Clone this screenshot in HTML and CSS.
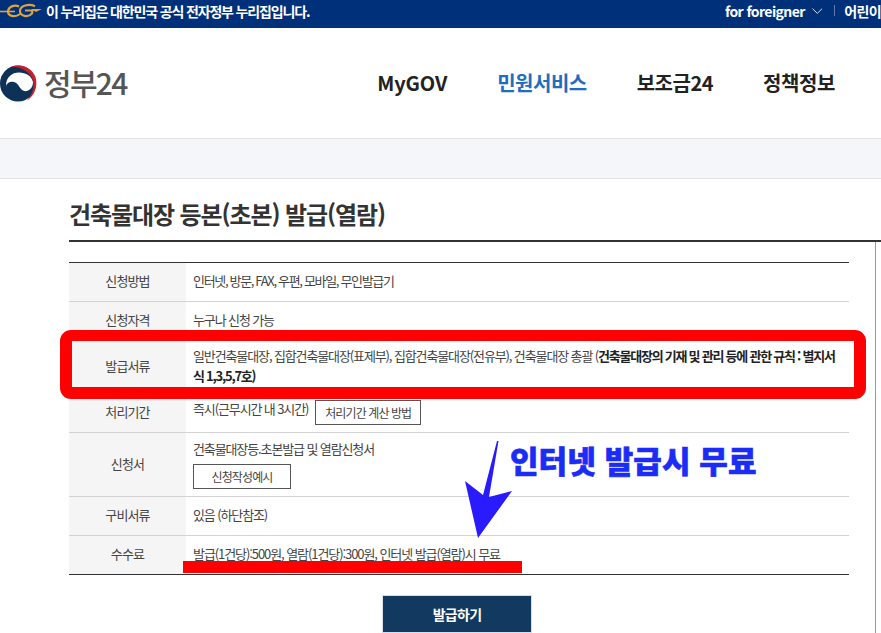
FILE: index.html
```html
<!DOCTYPE html>
<html lang="ko">
<head>
<meta charset="utf-8">
<title>건축물대장 등본(초본) 발급(열람)</title>
<link rel="stylesheet" href="styles.css">
</head>
<body>
<div class="topbar">
  <div class="gov">
    <svg class="eg" width="42" height="16" viewBox="0 0 42 16"><path d="M0 8.500H15" stroke="#d9a441" stroke-width="1.600" fill="none"/><path d="M19 3.500C15 1.500 9 3 8 8c-.5 5 7 7 12 3" stroke="#d9a441" stroke-width="2.200" fill="none"/><path d="M35 3.200C29 .5 20 2.500 20 8c0 5 8 7 12 2.500l.5-3H25" stroke="#d9a441" stroke-width="2.200" fill="none"/><path d="M31 6h11l-6 3z" fill="#d9a441"/></svg>
    <span class="gov-text">이 누리집은 대한민국 공식 전자정부 누리집입니다.</span>
  </div>
  <div class="util">
    <span class="foreigner">for foreigner</span>
    <svg class="chev" width="11" height="6" viewBox="0 0 11 6"><path d="M.5.5l5 5 5-5" stroke="#dfe6f2" fill="none"/></svg>
    <span class="sep"></span>
    <span class="kids">어린이</span>
  </div>
</div>
<header class="header">
  <div class="logo">
    <svg width="37" height="37" viewBox="0 0 37 37">
      <circle cx="18" cy="18.500" r="18" fill="#0e3158"/>
      <path d="M6 21C6 12 12 7.500 19 7.500C26 7.500 31.500 11 33 17C33 25 26 28 22 25C19 22 18 18 14 17C10 16 7 18 6 21Z" fill="#fff"/>
      <path d="M24 0H37V37H24C31 33 36 28 36 18.500C36 9 31 3 24 0Z" fill="#fff"/>
      <path d="M11 1.500C22-2 32 3 35.500 12C38 21 35 30 27 35.500C32 30 34.500 23 33 16C31 8 23 2 11 1.500Z" fill="#c5202e"/>
    </svg>
    <span class="logo-text">정부24</span>
  </div>
  <nav class="nav">
    <a class="nav-a">MyGOV</a>
    <a class="nav-b active">민원서비스</a>
    <a class="nav-c">보조금24</a>
    <a class="nav-d">정책정보</a>
  </nav>
</header>
<div class="crumb"></div>
<main class="main">
  <h1 class="title">건축물대장 등본(초본) 발급(열람)</h1>
  <div class="panel">
    <div class="info">
      <div class="th">신청방법</div>
      <div class="td"><span class="tight">인터넷, 방문, FAX, 우편, 모바일, 무인발급기</span></div>
      <div class="th">신청자격</div>
      <div class="td"><span>누구나 신청 가능</span></div>
      <div class="th">발급서류</div>
      <div class="td"><span>일반건축물대장, 집합건축물대장(표제부), 집합건축물대장(전유부), 건축물대장 총괄 (<b>건축물대장의 기재 및 관리 등에 관한 규칙 : 별지서식 1,3,5,7호)</b></span></div>
      <div class="th">처리기간</div>
      <div class="td inline"><span>즉시(근무시간 내 3시간)</span><span class="btn btn-time">처리기간 계산 방법</span></div>
      <div class="th">신청서</div>
      <div class="td stack"><span>건축물대장등.초본발급 및 열람신청서</span><span class="btn btn-form">신청작성예시</span></div>
      <div class="th">구비서류</div>
      <div class="td"><span>있음 (하단참조)</span></div>
      <div class="th last">수수료</div>
      <div class="td last"><span class="loose">발급(1건당):500원, 열람(1건당):300원, 인터넷 발급(열람)시 무료</span></div>
    </div>
    <div class="actions"><span class="issue">발급하기</span></div>
  </div>
</main>
<div class="red-box"></div>
<div class="red-line"></div>
<svg class="arrow" width="50" height="100" viewBox="0 0 50 100"><polygon points="32,0 33.500,0 24,56 47,50 13,97 0,40 18,54" fill="#2a1bff"/></svg>
<div class="note">인터넷 발급시 무료</div>
</body>
</html>
```
FILE: styles.css
```css
* { box-sizing: border-box; }
html, body { margin: 0; padding: 0; }
body {
  width: 881px;
  height: 633px;
  overflow: hidden;
  position: relative;
  background: #fff;
  color: #333;
  font-family: "Noto Sans CJK KR", "Noto Sans", sans-serif;
}
.topbar {
  height: 28px;
  padding-bottom: 7px;
  background: #00307a;
  color: #fff;
  display: flex;
  justify-content: space-between;
  align-items: center;
  overflow: hidden;
  font-size: 14px;
  font-weight: 700;
  white-space: nowrap;
}
.gov { display: flex; align-items: center; gap: 4px; }
.eg { display: block; }
.gov-text { letter-spacing: -1.16px; line-height: 20px; }
.util { display: flex; align-items: center; width: 156px; flex: none; }
.foreigner { letter-spacing: -0.6px; width: 90px; line-height: 20px; }
.chev { margin-right: 12px; }
.sep { width: 1px; height: 11px; background: #5c7cb0; margin-right: 9px; }
.kids { letter-spacing: -0.6px; line-height: 20px; }
.header {
  height: 110px;
  display: flex;
  align-items: center;
  justify-content: space-between;
  padding-right: 46px;
}
.logo { display: flex; align-items: center; gap: 7px; padding-top: 1px; }
.logo svg { display: block; }
.logo-text {
  font-size: 30px;
  line-height: 36px;
  color: #555;
  letter-spacing: -1.7px;
  font-weight: 500;
  position: relative;
  top: -2px;
}
.nav { display: flex; font-size: 20px; font-weight: 700; line-height: 30px; color: #222; }
.nav a { display: block; white-space: nowrap; }
.nav-a { letter-spacing: -0.1px; margin-right: 50px; }
.nav-b { letter-spacing: -0.5px; margin-right: 50px; }
.nav-c { letter-spacing: -0.5px; margin-right: 50px; }
.nav-d { letter-spacing: -0.4px; }
.active { color: #1f6dc1; }
.crumb {
  height: 41px;
  background: #f5f6fa;
  border-top: 1px solid #e2e2e6;
  border-bottom: 1px solid #e2e2e6;
}
.main { padding-left: 69px; }
.title {
  margin: 0;
  height: 63px;
  padding-top: 17px;
  font-size: 24px;
  line-height: 36px;
  font-weight: 700;
  letter-spacing: -1.1px;
  color: #333;
  border-bottom: 2px solid #333;
  white-space: nowrap;
}
.panel {
  width: 807px;
  padding-top: 20px;
  border-right: 1px solid #999;
  height: 400px;
}
.info {
  width: 780px;
  display: grid;
  grid-template-columns: 117px 1fr;
  grid-template-rows: 39px 39px 53px 39px 64px 39px 39px;
  border-top: 1px solid #333;
  font-size: 13px;
  line-height: 20px;
}
.th, .td { border-bottom: 1px solid #d3d3d3; display: flex; padding-bottom: 2px; }
.th {
  background: #f5f5f5;
  align-items: center;
  justify-content: center;
  color: #444;
  letter-spacing: -0.85px;
}
.td {
  align-items: center;
  padding-left: 7px;
  padding-right: 8px;
  color: #444;
  letter-spacing: -1.12px;
}
.tight { letter-spacing: -1.33px; }
.loose { letter-spacing: -1.08px; }
.td b { color: #222; font-weight: 700; letter-spacing: -1.24px; }
.td.inline { align-items: flex-start; padding-top: 5px; }
.td.stack { flex-direction: column; align-items: flex-start; padding-top: 6px; }
.last { border-bottom-color: #333; }
.btn {
  display: flex;
  align-items: center;
  justify-content: center;
  height: 25px;
  border: 1px solid #555;
  color: #444;
  font-size: 12px;
  letter-spacing: -0.9px;
}
.btn-time { width: 106px; margin-left: 7px; margin-top: 1px; }
.btn-form { width: 98px; margin-top: 5px; }
.actions { display: flex; justify-content: center; width: 780px; padding-top: 20px; padding-right: 4px; }
.issue {
  width: 150px;
  height: 38px;
  background: #123a60;
  border: 1px solid #d5e0ea;
  color: #fff;
  font-size: 14px;
  font-weight: 700;
  letter-spacing: -0.7px;
  display: flex;
  align-items: center;
  justify-content: center;
}
.red-box {
  position: absolute;
  left: 60px;
  top: 330px;
  width: 806px;
  height: 69px;
  border: solid #ff0000;
  border-width: 11px 12px 12px;
  border-radius: 11px;
}
.red-line {
  position: absolute;
  left: 183px;
  top: 561px;
  width: 339px;
  height: 12px;
  background: #ff0000;
}
.arrow { position: absolute; left: 465px; top: 441px; }
.note {
  position: absolute;
  left: 510px;
  top: 438px;
  font-size: 31px;
  line-height: 44px;
  font-weight: 900;
  color: #1a2cf5;
  letter-spacing: 0.1px;
  -webkit-text-stroke: 0.6px #1a2cf5;
  white-space: nowrap;
}
```
